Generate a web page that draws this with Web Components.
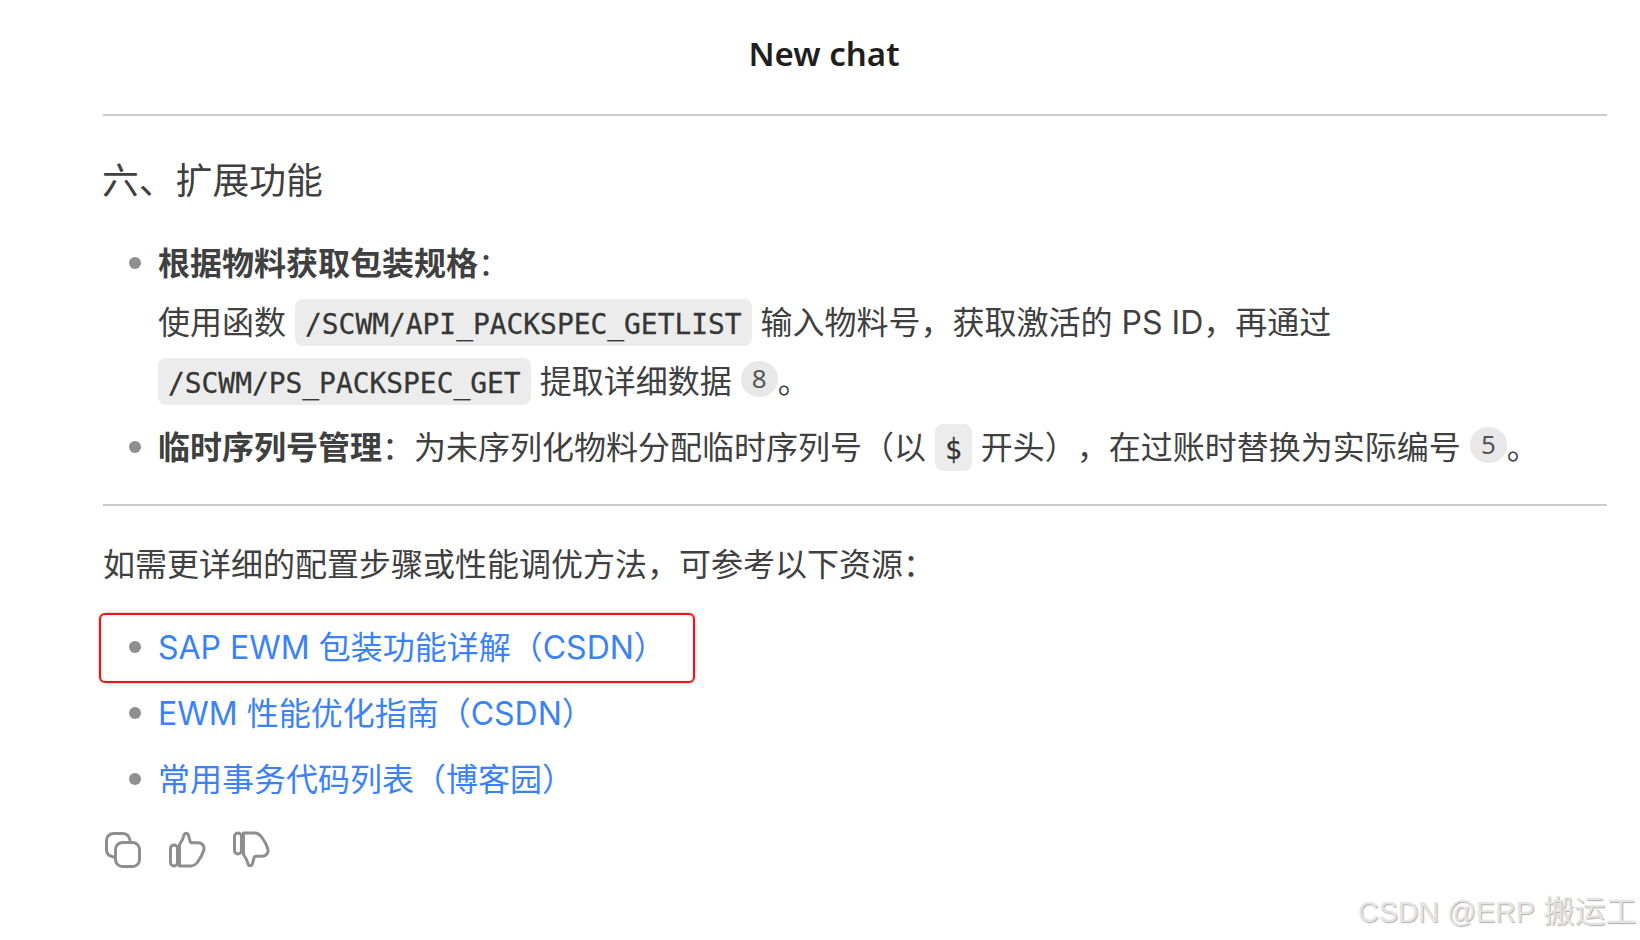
<!DOCTYPE html>
<html lang="zh">
<head>
<meta charset="utf-8">
<title>New chat</title>
<style>
	html, body { margin: 0; height: 100%; background: #fff; }
	body {
		font-family: "Inter", "Noto Sans CJK SC", sans-serif;
		font-size: 32px;
		color: #404040;
		text-spacing-trim: space-all;
	}
	water-mark span { font-size: 28.6px; }
</style>
</head>
<body>
<chat-page>
	<chat-header>New chat</chat-header>
	<md-rule></md-rule>
	<md-heading>六、扩展功能</md-heading>
	<md-list>
		<md-item>
			<strong>根据物料获取包装规格</strong>：<br>
			使用函数 <md-code>/SCWM/API_PACKSPEC_GETLIST</md-code> 输入物料号，获取激活的 PS ID，再通过<br>
			<md-code>/SCWM/PS_PACKSPEC_GET</md-code> 提取详细数据 <md-cite>8</md-cite>。
		</md-item>
		<md-item>
			<strong>临时序列号管理</strong>：为未序列化物料分配临时序列号（以 <md-code>$</md-code> 开头），在过账时替换为实际编号 <md-cite>5</md-cite>。
		</md-item>
	</md-list>
	<md-rule class="after-list"></md-rule>
	<md-para>如需更详细的配置步骤或性能调优方法，可参考以下资源：</md-para>
	<md-list class="links">
		<md-item marked><md-link>SAP EWM 包装功能详解（CSDN）</md-link></md-item>
		<md-item><md-link>EWM 性能优化指南（CSDN）</md-link></md-item>
		<md-item><md-link>常用事务代码列表（博客园）</md-link></md-item>
	</md-list>
	<chat-actions></chat-actions>
</chat-page>
<water-mark><span>CSDN @ERP</span> 搬运工</water-mark>

<script>
// one small helper so each class only has to list its markup
function shadow(el, html) {
	el.attachShadow({mode:'open'}).innerHTML = html;
}

class ChatPage extends HTMLElement {
	constructor() {
		super();
		shadow(this, `
			<style>
				:host { display: block; padding: 0 33px 0 103px; }
			</style>
			<slot></slot>
		`);
	}
}

class ChatHeader extends HTMLElement {
	constructor() {
		super();
		shadow(this, `
			<style>
				:host {
					display: block;
					height: 114px;
					padding: 30px 0 0 8px;
					box-sizing: border-box;
					margin-left: -103px;
					margin-right: -33px;
					text-align: center;
					font-family: "Noto Sans", sans-serif;
					font-size: 33px;
					font-weight: 600;
					line-height: 48px;
					color: #1f1f1f;
				}
			</style>
			<slot></slot>
		`);
	}
}

class MdRule extends HTMLElement {
	constructor() {
		super();
		shadow(this, `
			<style>
				:host { display: block; height: 2px; background: #cccccc; }
				:host(.after-list) { margin-top: 27px; }
			</style>
		`);
	}
}

class MdHeading extends HTMLElement {
	constructor() {
		super();
		shadow(this, `
			<style>
				:host {
					display: block;
					margin-top: 36px;
					margin-left: -1px;
					font-size: 36.8px;
					line-height: 58px;
					color: #404040;
				}
			</style>
			<slot></slot>
		`);
	}
}

class MdList extends HTMLElement {
	constructor() {
		super();
		shadow(this, `
			<style>
				:host { display: flex; flex-direction: column; margin-top: 24px; gap: 7px; }
				:host(.links) { margin-top: 24px; }
			</style>
			<slot></slot>
		`);
	}
}

class MdItem extends HTMLElement {
	constructor() {
		super();
		shadow(this, `
			<style>
				:host {
					display: grid;
					grid-template-columns: 55px 1fr;
					position: relative;
					line-height: 59px;
				}
				.dot {
					width: 12px;
					height: 12px;
					margin: 23px 0 0 26px;
					border-radius: 50%;
					background: #8f8f8f;
				}
				.mark { display: none; }
				:host([marked]) .mark {
					display: block;
					position: absolute;
					left: -4px;
					top: -5px;
					width: 596px;
					height: 70px;
					box-sizing: border-box;
					border: 2px solid #f01414;
					border-radius: 6px;
					box-shadow: 0 0 3px rgba(0,0,0,.3), inset 0 0 3px rgba(0,0,0,.15);
				}
			</style>
			<div class="dot"></div>
			<div class="body"><slot></slot></div>
			<div class="mark"></div>
		`);
	}
}

class MdCode extends HTMLElement {
	constructor() {
		super();
		shadow(this, `
			<style>
				:host {
					display: inline-block;
					padding: 0 10px;
					height: 47px;
					line-height: 52px;
					border-radius: 8px;
					background: #ececec;
					font-family: "DejaVu Sans Mono", monospace;
					font-size: 27.9px;
					color: #363636;
					-webkit-text-stroke: .3px #363636;
				}
			</style>
			<slot></slot>
		`);
	}
}

class MdCite extends HTMLElement {
	constructor() {
		super();
		shadow(this, `
			<style>
				:host {
					display: inline-block;
					width: 37px;
					height: 36px;
					line-height: 34px;
					border-radius: 18px;
					background: #e8e8e8;
					text-align: center;
					font-family: "Noto Sans", sans-serif;
					font-size: 26px;
					color: #555;
					vertical-align: 5px;
				}
			</style>
			<slot></slot>
		`);
	}
}

class MdPara extends HTMLElement {
	constructor() {
		super();
		shadow(this, `
			<style>
				:host { display: block; margin-top: 29px; line-height: 59px; }
			</style>
			<slot></slot>
		`);
	}
}

class MdLink extends HTMLElement {
	constructor() {
		super();
		shadow(this, `
			<style>
				:host { color: #3b82f6; }
			</style>
			<slot></slot>
		`);
	}
}

class ChatActions extends HTMLElement {
	constructor() {
		super();
		const thumb = 'M10.5 34V12.5C13 9 14.6 5.5 15.2 2.6C15.6 0.8 18.6 0.8 19.3 2.8L21 9.2C21.2 10.2 22 10.8 23 10.8H29C33.5 10.8 36 14.5 34.7 18.5C33.6 22 31.5 26 29 29.5C26.8 32.6 25 34 21.5 34Z';
		shadow(this, `
			<style>
				:host { display: flex; gap: 28px; margin-top: 23px; }
				svg { width: 36px; height: 36px; overflow: visible; fill: none; stroke: #8e8e8e; stroke-width: 3; stroke-linecap: round; stroke-linejoin: round; }
				.copy { margin-left: 2px; }
			</style>
			<svg class="copy" viewBox="0 0 36 36">
				<rect x="10.5" y="10.5" width="24" height="24" rx="7"/>
				<path d="M8.5 25C4 24.2 1.5 21.5 1.5 17.5V8.5A7 7 0 0 1 8.5 1.5H17.5C21.5 1.5 24 3.5 25 8"/>
			</svg>
			<svg viewBox="0 0 36 36">
				<rect x="1.5" y="13" width="7" height="21" rx="3.5"/>
				<path d="${thumb}"/>
			</svg>
			<svg viewBox="0 0 36 36">
				<g transform="matrix(1 0 0 -1 0 35)">
					<rect x="1.5" y="13" width="7" height="21" rx="3.5"/>
					<path d="${thumb}"/>
				</g>
			</svg>
		`);
	}
}

class WaterMark extends HTMLElement {
	constructor() {
		super();
		shadow(this, `
			<style>
				:host {
					position: absolute;
					left: 1358px;
					top: 890px;
					white-space: nowrap;
					font-family: "Liberation Sans", "Noto Sans CJK SC", sans-serif;
					font-size: 31px;
					line-height: 44px;
					color: #e4e4e4;
					text-shadow: 1px 1px 1px #b0b0b0;
				}
			</style>
			<slot></slot>
		`);
	}
}

customElements.define('chat-page', ChatPage);
customElements.define('chat-header', ChatHeader);
customElements.define('md-rule', MdRule);
customElements.define('md-heading', MdHeading);
customElements.define('md-list', MdList);
customElements.define('md-item', MdItem);
customElements.define('md-code', MdCode);
customElements.define('md-cite', MdCite);
customElements.define('md-para', MdPara);
customElements.define('md-link', MdLink);
customElements.define('chat-actions', ChatActions);
customElements.define('water-mark', WaterMark);
</script>
</body>
</html>
